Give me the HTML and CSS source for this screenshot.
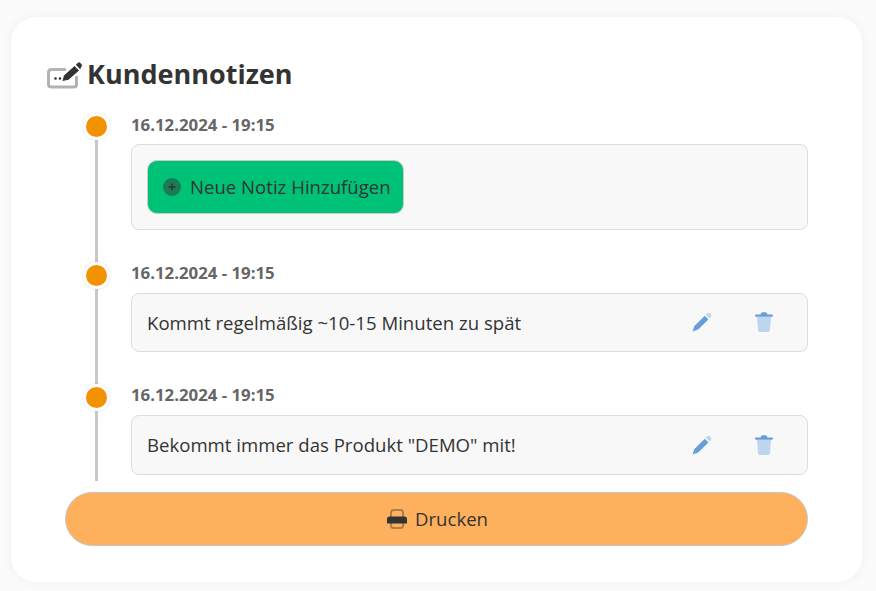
FILE: index.html
```html
<!DOCTYPE html>
<html lang="de">
<head>
  <meta charset="UTF-8" />
  <meta name="viewport" content="width=device-width, initial-scale=1.0"/>
  <title>Kundennotizen</title>
  <link rel="stylesheet" href="styles.css">
</head>
<body>

  <div class="card">
    <h1 class="title">
      <svg class="title-icon" viewBox="0 0 36 29" width="36" height="29">
        <path d="M19 9.500H4.500Q1.500 9.500 1.500 12.500V24.500Q1.500 27 4.500 27H27Q29.500 27 29.500 24.500V16" fill="none" stroke="#b3b3b3" stroke-width="3"/>
        <path d="M15.500 21L17 15.500L27.500 6L32 10.500L21.500 19.800Z" fill="#333"/>
        <path d="M28.800 4.800L31 2.800Q32.200 1.800 33.300 2.900L34.600 4.300Q35.600 5.500 34.500 6.600L33.200 9.200Z" fill="#333"/>
        <circle cx="8.500" cy="18.500" r="1.300" fill="#333"/>
        <circle cx="13" cy="18.500" r="1.300" fill="#333"/>
      </svg>
      <span class="title-text">Kundennotizen</span>
    </h1>

    <div class="timeline">
      <div class="item">
        <span class="dot"></span>
        <div class="date">16.12.2024 - 19:15</div>
        <div class="note">
          <button class="add-btn" type="button">
            <svg class="add-icon" viewBox="0 0 18 18" width="18" height="18">
              <circle cx="9" cy="9" r="9" fill="#333" opacity="0.5"/>
              <path d="M9 5.500V12.500M5.500 9H12.500" stroke="#333" stroke-width="1.500"/>
            </svg>
            <span class="btn-label">Neue Notiz Hinzufügen</span>
          </button>
        </div>
      </div>

      <div class="item">
        <span class="dot"></span>
        <div class="date">16.12.2024 - 19:15</div>
        <div class="note">
          <span class="note-text">Kommt regelmäßig ~10-15 Minuten zu spät</span>
          <svg class="pen" viewBox="0 0 20 20" width="20" height="20">
            <path d="M12.800 3.800L16.400 7.400L7 16.800Q6.300 17.500 5.400 17.800L.5 19.500L2.200 14.600Q2.500 13.700 3.200 13.200Z" fill="#659fdb"/>
            <path d="M13.800 2.800L15.300 1.300Q16.500 .2 17.700 1.300L18.900 2.500Q20 3.700 18.900 4.900L17.400 6.400Z" fill="#bdd5ee"/>
          </svg>
          <svg class="trash" viewBox="0 0 18 20" width="18" height="20">
            <path d="M2 5H16L15 18Q14.900 20 13 20H5Q3.100 20 3 18Z" fill="#bdd5ee"/>
            <path d="M1 2.500H5.500L6.300 1Q6.700 .3 7.500 .3H10.500Q11.300 .3 11.700 1L12.500 2.500H17Q18 2.500 18 3.500T17 4.800H1Q0 4.800 0 3.500T1 2.500Z" fill="#659fdb"/>
          </svg>
        </div>
      </div>

      <div class="item">
        <span class="dot"></span>
        <div class="date">16.12.2024 - 19:15</div>
        <div class="note">
          <span class="note-text">Bekommt immer das Produkt "DEMO" mit!</span>
          <svg class="pen" viewBox="0 0 20 20" width="20" height="20">
            <path d="M12.800 3.800L16.400 7.400L7 16.800Q6.300 17.500 5.400 17.800L.5 19.500L2.200 14.600Q2.500 13.700 3.200 13.200Z" fill="#659fdb"/>
            <path d="M13.800 2.800L15.300 1.300Q16.500 .2 17.700 1.300L18.900 2.500Q20 3.700 18.900 4.900L17.400 6.400Z" fill="#bdd5ee"/>
          </svg>
          <svg class="trash" viewBox="0 0 18 20" width="18" height="20">
            <path d="M2 5H16L15 18Q14.900 20 13 20H5Q3.100 20 3 18Z" fill="#bdd5ee"/>
            <path d="M1 2.500H5.500L6.300 1Q6.700 .3 7.500 .3H10.500Q11.300 .3 11.700 1L12.500 2.500H17Q18 2.500 18 3.500T17 4.800H1Q0 4.800 0 3.500T1 2.500Z" fill="#659fdb"/>
          </svg>
        </div>
      </div>
    </div>

    <button class="print-btn" type="button">
      <svg class="print-icon" viewBox="0 0 20 20" width="20" height="20">
        <path d="M4 8V3.500Q4 1 6.500 1H13.500Q16 1 16 3.500V8M4 14V16.500Q4 19 6.500 19H13.500Q16 19 16 16.500V14" fill="none" stroke="#333" stroke-opacity="0.4" stroke-width="2"/>
        <path d="M2.500 7.500H17.500Q20 7.500 20 10V14Q20 14.500 19.500 14.500H.5Q0 14.500 0 14V10Q0 7.500 2.500 7.500Z" fill="#333"/>
      </svg>
      <span class="print-label">Drucken</span>
    </button>
  </div>

</body>
</html>
```

FILE: styles.css
```css
body {
  font-family: "Open Sans", Arial, sans-serif;
  background-color: #fbfbfc;
  margin: 0;
  padding: 17px 14px 9px 11px;
  color: #333;
}

.card {
  height: 565px;
  box-sizing: border-box;
  background: white;
  border-radius: 25px;
  box-shadow: 0 0 12px rgba(0,0,0,0.05);
  padding: 38px 54px 0 36px;
}

.title {
  display: flex;
  align-items: center;
  gap: 4px;
  margin: 0;
  height: 38px;
  font-size: 27px;
  font-weight: 700;
  color: #333;
}

.title-icon {
  flex: none;
}

.title-text {
  margin-bottom: 2px;
}

.timeline {
  position: relative;
  margin: 21.500px 0 0 18px;
  padding-left: 66px;
}

.timeline::before {
  content: "";
  position: absolute;
  left: 30px;
  top: 0;
  bottom: 0;
  width: 3px;
  background-color: #c8c8c8;
}

.item {
  position: relative;
  padding-bottom: 33px;
}

.item:last-child {
  padding-bottom: 6.400px;
}

.dot {
  position: absolute;
  left: -48px;
  top: -1.500px;
  width: 21px;
  height: 21px;
  box-sizing: content-box;
  background-color: #f39200;
  border: 3px solid white;
  border-radius: 50%;
  box-shadow: 0 0 3px rgba(0,0,0,0.12);
}

.date {
  height: 20px;
  line-height: 20px;
  margin-bottom: 9.500px;
  font-size: 16.800px;
  font-weight: 700;
  color: #666;
}

.note {
  display: flex;
  align-items: center;
  padding: 15px;
  min-height: 27.800px;
  background-color: #f8f8f8;
  border: 1px solid #ddd;
  border-radius: 8px;
  font-size: 18.600px;
}

.note-text {
  flex: 1;
}

.pen {
  margin-right: 43px;
}

.trash {
  margin-right: 19px;
}

.add-btn {
  display: flex;
  align-items: center;
  gap: 9px;
  height: 54px;
  padding: 0 12px 0 15px;
  background-color: #00c277;
  color: #333;
  border: 1px solid #ccc;
  border-radius: 10px;
  font-family: inherit;
  font-size: 18.600px;
}

.btn-label {
  margin-bottom: 2px;
}

.print-label {
  margin-bottom: 1px;
}

.print-btn {
  display: flex;
  align-items: center;
  justify-content: center;
  gap: 8px;
  width: 743px;
  height: 54px;
  margin: 11px 0 0 18px;
  padding-left: 8px;
  background-color: #ffb05c;
  color: #333;
  border: 1px solid #c4c8cc;
  border-radius: 27px;
  font-family: inherit;
  font-size: 18.600px;
}
```
